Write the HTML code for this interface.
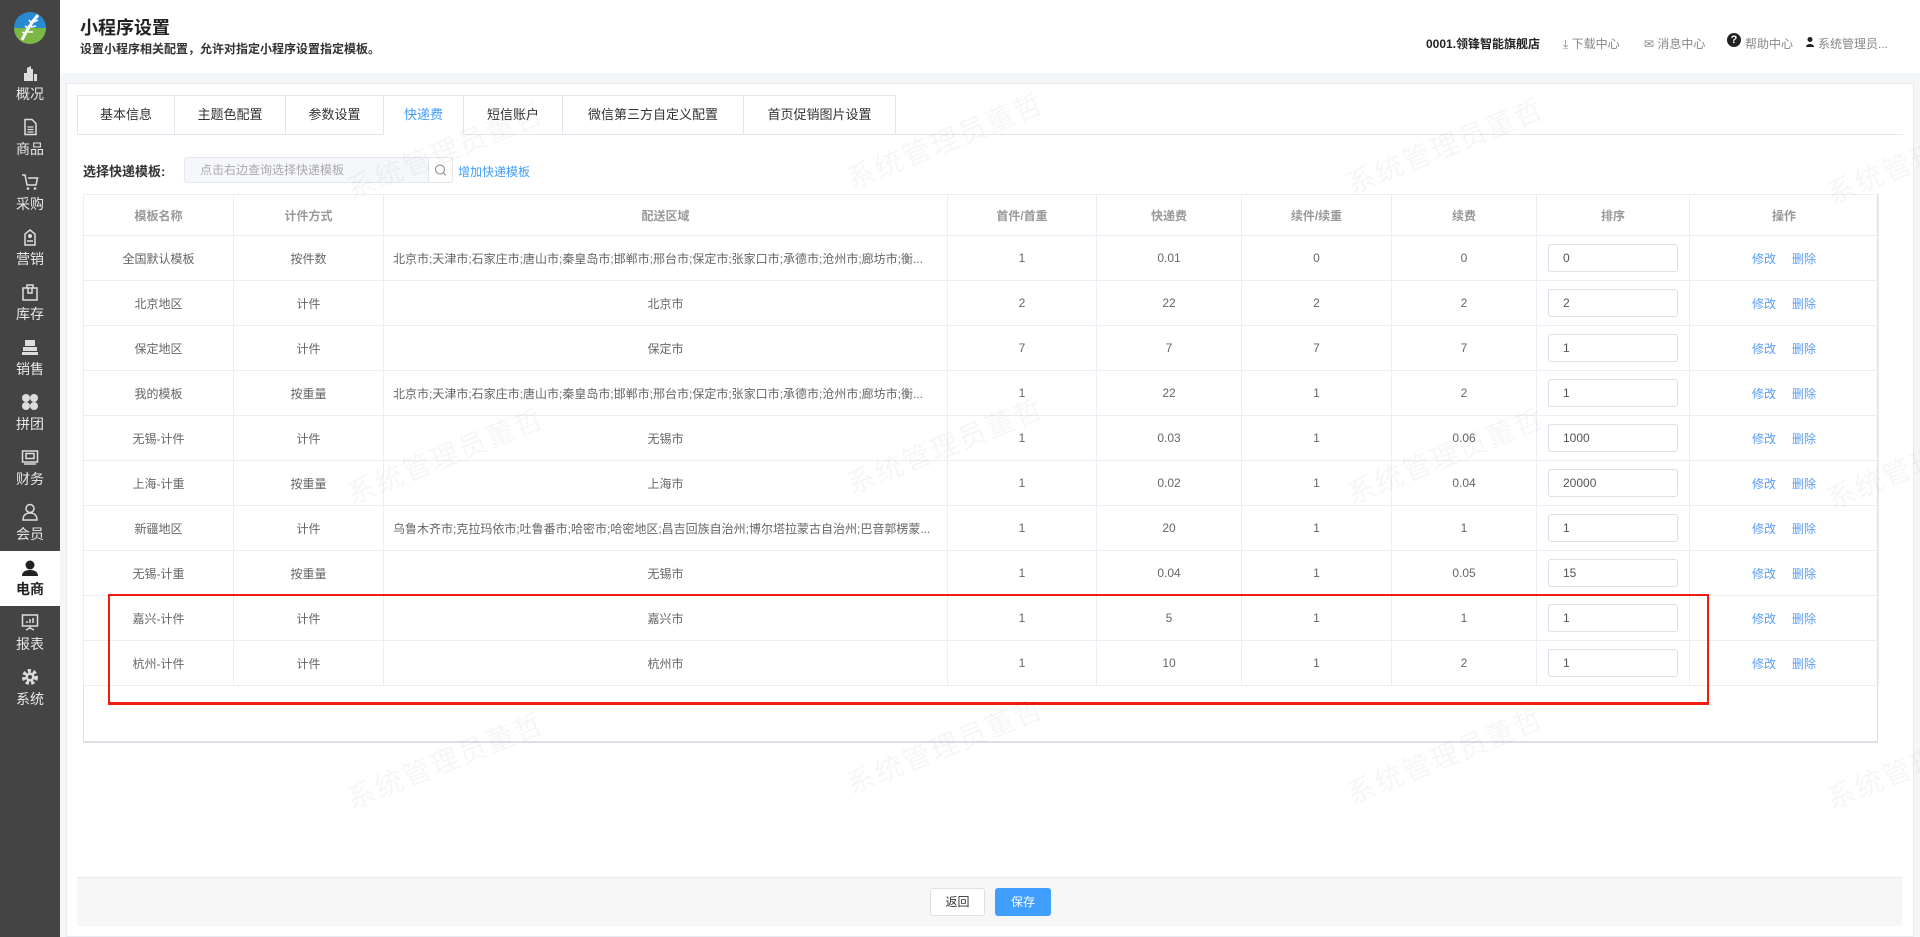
<!DOCTYPE html>
<html><head><meta charset="utf-8">
<style>
*{margin:0;padding:0;box-sizing:border-box}
body{width:1920px;height:937px;overflow:hidden;background:#f5f6f8;font-family:"Liberation Sans","Noto Sans CJK SC",sans-serif;position:relative;color:#333}
.abs{position:absolute}
#side{left:0;top:0;width:60px;height:937px;background:#444}
.si{position:absolute;left:0;width:60px;text-align:center;color:#e8e8e8;font-size:14px}
.si .ic{position:absolute;left:21px;width:18px;height:18px}
.si .lb{position:absolute;left:0;width:60px;line-height:16px}
#hdr{left:60px;top:0;width:1860px;height:73px;background:#fff}
#panel{left:66px;top:83px;width:1848px;height:854px;background:#fff;border:1px solid #e8eaef}
.tab{position:absolute;top:95px;height:40px;border:1px solid #e4e7ed;border-right:none;font-size:13px;line-height:38px;text-align:center;color:#333;background:#fff}
table{position:absolute;left:83px;top:194px;border-collapse:collapse;font-size:12px;color:#666}
td,th{border:1px solid #ebeef5;height:45px;text-align:center;padding:0;font-weight:normal;white-space:nowrap;overflow:hidden}
th{color:#999;font-weight:bold;height:41px}
td.l{text-align:left;padding-left:9px;text-overflow:ellipsis;max-width:564px}
.inp{display:inline-block;width:130px;height:28px;border:1px solid #dcdfe6;border-radius:3px;text-align:left;padding-left:14px;line-height:26px;color:#555;vertical-align:middle}
.lk{color:#5a9cf8;margin:0 8px}
.wm{position:absolute;font-size:28px;color:rgba(0,0,0,0.035);transform:rotate(-22deg);white-space:nowrap;letter-spacing:2px}
</style></head><body>
<div id="side" class="abs">
  <svg class="abs" style="left:12px;top:10px" width="36" height="36" viewBox="0 0 36 36"><circle cx="18" cy="18" r="16" fill="#2a8ad1"/><path d="M2 18a16 16 0 0 0 32 0z" fill="#7ab843"/><path d="M10 30 C14 22 18 14 26 5" stroke="#fff" stroke-width="3" fill="none"/><path d="M14 24l-4-2M17 19l-4-3M20 14l-3-4M16 22l5 0M19 17l5-1M22 12l4-2" stroke="#fff" stroke-width="1.5"/></svg>
  <div class="si" style="top:64px"><svg class="ic" viewBox="0 0 18 18"><path d="M3 17V9h3V4l4-2v3h2v12z M13 17V10h3v7z" fill="#ddd"/></svg><div class="lb" style="top:22px">概况</div></div>
  <div class="si" style="top:118px"><svg class="ic" viewBox="0 0 18 18"><path d="M4 1.5h7l4 4v11H4z" fill="none" stroke="#ddd" stroke-width="1.5"/><path d="M6.5 9h6M6.5 11.5h6M6.5 14h6" stroke="#ddd" stroke-width="1.3"/></svg><div class="lb" style="top:23px">商品</div></div>
  <div class="si" style="top:173px"><svg class="ic" viewBox="0 0 18 18"><path d="M1 2h3l2 10h9l1.5-7H7" fill="none" stroke="#ddd" stroke-width="1.5"/><circle cx="7" cy="15.5" r="1.3" fill="#ddd"/><circle cx="14" cy="15.5" r="1.3" fill="#ddd"/></svg><div class="lb" style="top:23px">采购</div></div>
  <div class="si" style="top:228px"><svg class="ic" viewBox="0 0 18 18"><path d="M4 17V6l5-4 5 4v11z" fill="none" stroke="#ddd" stroke-width="1.5"/><circle cx="9" cy="8" r="2" fill="#ddd"/><path d="M6 13h6" stroke="#ddd" stroke-width="1.5"/></svg><div class="lb" style="top:23px">营销</div></div>
  <div class="si" style="top:283px"><svg class="ic" viewBox="0 0 18 18"><rect x="2" y="5" width="14" height="12" fill="none" stroke="#ddd" stroke-width="1.5"/><path d="M6 5V2h6v3M7 5v5h4V5" fill="none" stroke="#ddd" stroke-width="1.5"/></svg><div class="lb" style="top:23px">库存</div></div>
  <div class="si" style="top:338px"><svg class="ic" viewBox="0 0 18 18"><path d="M4 2h10v6H4zM2 9h14v4H2zM1 14h16v3H1z" fill="#ddd"/></svg><div class="lb" style="top:23px">销售</div></div>
  <div class="si" style="top:393px"><svg class="ic" viewBox="0 0 18 18"><circle cx="5" cy="5" r="4" fill="#ddd"/><circle cx="13" cy="5" r="4" fill="#ddd"/><circle cx="5" cy="13" r="4" fill="#ddd"/><circle cx="13" cy="13" r="4" fill="#ddd"/></svg><div class="lb" style="top:23px">拼团</div></div>
  <div class="si" style="top:448px"><svg class="ic" viewBox="0 0 18 18"><rect x="1.5" y="3" width="15" height="11" fill="none" stroke="#ddd" stroke-width="1.5"/><rect x="5" y="5.5" width="8" height="5" fill="none" stroke="#ddd" stroke-width="1.5"/><path d="M3 16h12" stroke="#ddd" stroke-width="1.5"/></svg><div class="lb" style="top:23px">财务</div></div>
  <div class="si" style="top:503px"><svg class="ic" viewBox="0 0 18 18"><circle cx="9" cy="5.5" r="4" fill="none" stroke="#ddd" stroke-width="1.5"/><path d="M2 17c0-5 3-7 7-7s7 2 7 7z" fill="none" stroke="#ddd" stroke-width="1.5"/></svg><div class="lb" style="top:23px">会员</div></div>
  <div class="abs" style="left:0;top:551px;width:60px;height:55px;background:#fff"></div>
  <div class="si" style="top:559px;color:#222"><svg class="ic" viewBox="0 0 18 18"><circle cx="9" cy="6" r="4.5" fill="#222"/><path d="M1 17c0-4 3-6 8-6s8 2 8 6z" fill="#222"/></svg><div class="lb" style="top:22px;font-weight:bold">电商</div></div>
  <div class="si" style="top:613px"><svg class="ic" viewBox="0 0 18 18"><rect x="1.5" y="2" width="15" height="11" fill="none" stroke="#ddd" stroke-width="1.5"/><path d="M6 10V8M9 10V6M12 10V5M9 13v2M5 17l4-2 4 2" stroke="#ddd" stroke-width="1.5" fill="none"/></svg><div class="lb" style="top:23px">报表</div></div>
  <div class="si" style="top:668px"><svg class="ic" viewBox="0 0 18 18"><circle cx="9" cy="9" r="6" fill="none" stroke="#ddd" stroke-width="4" stroke-dasharray="3 2.2"/><circle cx="9" cy="9" r="4.5" fill="#ddd"/><circle cx="9" cy="9" r="2" fill="#444"/></svg><div class="lb" style="top:23px">系统</div></div>
</div>
<div id="hdr" class="abs">
  <div class="abs" style="left:20px;top:14px;font-size:18px;font-weight:bold;color:#222">小程序设置</div>
  <div class="abs" style="left:20px;top:40px;font-size:12px;font-weight:bold;color:#333">设置小程序相关配置，允许对指定小程序设置指定模板。</div>
  <div class="abs" style="left:1366px;top:35px;font-size:12px;font-weight:bold;color:#222">0001.领锋智能旗舰店</div>
  <div class="abs" style="left:1503px;top:35px;font-size:12px;color:#888">⤓ 下载中心</div>
  <div class="abs" style="left:1584px;top:35px;font-size:12px;color:#888">✉ 消息中心</div>
  <div class="abs" style="left:1667px;top:33px;width:14px;height:14px;border-radius:7px;background:#222;color:#fff;font-size:11px;font-weight:bold;text-align:center;line-height:14px">?</div>
  <div class="abs" style="left:1685px;top:35px;font-size:12px;color:#888">帮助中心</div>
  <svg class="abs" style="left:1746px;top:37px" width="8" height="10" viewBox="0 0 8 10"><circle cx="4" cy="2.5" r="2.5" fill="#222"/><path d="M0 10c0-4 8-4 8 0z" fill="#222"/></svg>
  <div class="abs" style="left:1758px;top:35px;font-size:12px;color:#888">系统管理员...</div>
</div>
<div id="panel" class="abs"></div>
<div class="abs" style="left:77px;top:134px;width:1826px;height:1px;background:#e4e7ed"></div>
<div class="tab" style="left:77px;width:97px">基本信息</div>
<div class="tab" style="left:174px;width:111px">主题色配置</div>
<div class="tab" style="left:285px;width:98px">参数设置</div>
<div class="tab" style="left:383px;width:80px;color:#409eff;border-bottom-color:#fff">快递费</div>
<div class="tab" style="left:463px;width:99px">短信账户</div>
<div class="tab" style="left:562px;width:181px">微信第三方自定义配置</div>
<div class="tab" style="left:743px;width:153px;border-right:1px solid #e4e7ed">首页促销图片设置</div>
<div class="abs" style="left:83px;top:161px;font-size:13px;font-weight:bold;color:#333">选择快递模板:</div>
<div class="abs" style="left:184px;top:157px;width:269px;height:26px;background:#f5f7fa;border:1px solid #e4e7ed;border-radius:3px;font-size:12px;color:#aaa;line-height:24px;padding-left:15px">点击右边查询选择快递模板</div>
<div class="abs" style="left:428px;top:157px;width:25px;height:26px;border:1px solid #e4e7ed;border-radius:0 3px 3px 0;background:#fff"><svg width="23" height="24" viewBox="0 0 23 24"><circle cx="11" cy="11.5" r="4.5" fill="none" stroke="#999" stroke-width="1.2"/><path d="M14.3 14.8l2.5 2.5" stroke="#999" stroke-width="1.2"/></svg></div>
<div class="abs" style="left:458px;top:163px;font-size:12px;color:#409eff">增加快递模板</div>
<div class="abs" style="left:83px;top:194px;width:1795px;height:549px;border:1px solid #dcdfe6;border-bottom-width:2px"></div>
<table>
<tr><th style="width:150px">模板名称</th><th style="width:150px">计件方式</th><th style="width:564px">配送区域</th><th style="width:149px">首件/首重</th><th style="width:145px">快递费</th><th style="width:150px">续件/续重</th><th style="width:145px">续费</th><th style="width:153px">排序</th><th style="width:189px">操作</th></tr>
<tr><td>全国默认模板</td><td>按件数</td><td class="l">北京市;天津市;石家庄市;唐山市;秦皇岛市;邯郸市;邢台市;保定市;张家口市;承德市;沧州市;廊坊市;衡...</td><td>1</td><td>0.01</td><td>0</td><td>0</td><td><span class="inp">0</span></td><td><span class="lk">修改</span><span class="lk">删除</span></td></tr>
<tr><td>北京地区</td><td>计件</td><td>北京市</td><td>2</td><td>22</td><td>2</td><td>2</td><td><span class="inp">2</span></td><td><span class="lk">修改</span><span class="lk">删除</span></td></tr>
<tr><td>保定地区</td><td>计件</td><td>保定市</td><td>7</td><td>7</td><td>7</td><td>7</td><td><span class="inp">1</span></td><td><span class="lk">修改</span><span class="lk">删除</span></td></tr>
<tr><td>我的模板</td><td>按重量</td><td class="l">北京市;天津市;石家庄市;唐山市;秦皇岛市;邯郸市;邢台市;保定市;张家口市;承德市;沧州市;廊坊市;衡...</td><td>1</td><td>22</td><td>1</td><td>2</td><td><span class="inp">1</span></td><td><span class="lk">修改</span><span class="lk">删除</span></td></tr>
<tr><td>无锡-计件</td><td>计件</td><td>无锡市</td><td>1</td><td>0.03</td><td>1</td><td>0.06</td><td><span class="inp">1000</span></td><td><span class="lk">修改</span><span class="lk">删除</span></td></tr>
<tr><td>上海-计重</td><td>按重量</td><td>上海市</td><td>1</td><td>0.02</td><td>1</td><td>0.04</td><td><span class="inp">20000</span></td><td><span class="lk">修改</span><span class="lk">删除</span></td></tr>
<tr><td>新疆地区</td><td>计件</td><td class="l">乌鲁木齐市;克拉玛依市;吐鲁番市;哈密市;哈密地区;昌吉回族自治州;博尔塔拉蒙古自治州;巴音郭楞蒙...</td><td>1</td><td>20</td><td>1</td><td>1</td><td><span class="inp">1</span></td><td><span class="lk">修改</span><span class="lk">删除</span></td></tr>
<tr><td>无锡-计重</td><td>按重量</td><td>无锡市</td><td>1</td><td>0.04</td><td>1</td><td>0.05</td><td><span class="inp">15</span></td><td><span class="lk">修改</span><span class="lk">删除</span></td></tr>
<tr><td>嘉兴-计件</td><td>计件</td><td>嘉兴市</td><td>1</td><td>5</td><td>1</td><td>1</td><td><span class="inp">1</span></td><td><span class="lk">修改</span><span class="lk">删除</span></td></tr>
<tr><td>杭州-计件</td><td>计件</td><td>杭州市</td><td>1</td><td>10</td><td>1</td><td>2</td><td><span class="inp">1</span></td><td><span class="lk">修改</span><span class="lk">删除</span></td></tr>
</table>
<div class="abs" style="left:108px;top:594px;width:1601px;height:111px;border:2px solid #f21b0f;border-bottom-width:3px"></div>
<div class="abs" style="left:77px;top:877px;width:1825px;height:49px;background:#f7f7f7;border-top:1px solid #ebebeb"></div>
<div class="abs" style="left:930px;top:888px;width:55px;height:28px;border:1px solid #dcdfe6;border-radius:3px;background:#fff;font-size:12px;line-height:26px;text-align:center;color:#333">返回</div>
<div class="abs" style="left:995px;top:888px;width:56px;height:28px;border-radius:3px;background:#409eff;font-size:12px;line-height:28px;text-align:center;color:#fff">保存</div>
<div class="wm" style="left:340px;top:130px">系统管理员董哲</div>
<div class="wm" style="left:840px;top:120px">系统管理员董哲</div>
<div class="wm" style="left:1340px;top:125px">系统管理员董哲</div>
<div class="wm" style="left:1820px;top:135px">系统管理员董哲</div>
<div class="wm" style="left:340px;top:435px">系统管理员董哲</div>
<div class="wm" style="left:840px;top:425px">系统管理员董哲</div>
<div class="wm" style="left:1340px;top:435px">系统管理员董哲</div>
<div class="wm" style="left:1820px;top:440px">系统管理员董哲</div>
<div class="wm" style="left:340px;top:740px">系统管理员董哲</div>
<div class="wm" style="left:840px;top:725px">系统管理员董哲</div>
<div class="wm" style="left:1340px;top:735px">系统管理员董哲</div>
<div class="wm" style="left:1820px;top:740px">系统管理员董哲</div>
</body></html>
